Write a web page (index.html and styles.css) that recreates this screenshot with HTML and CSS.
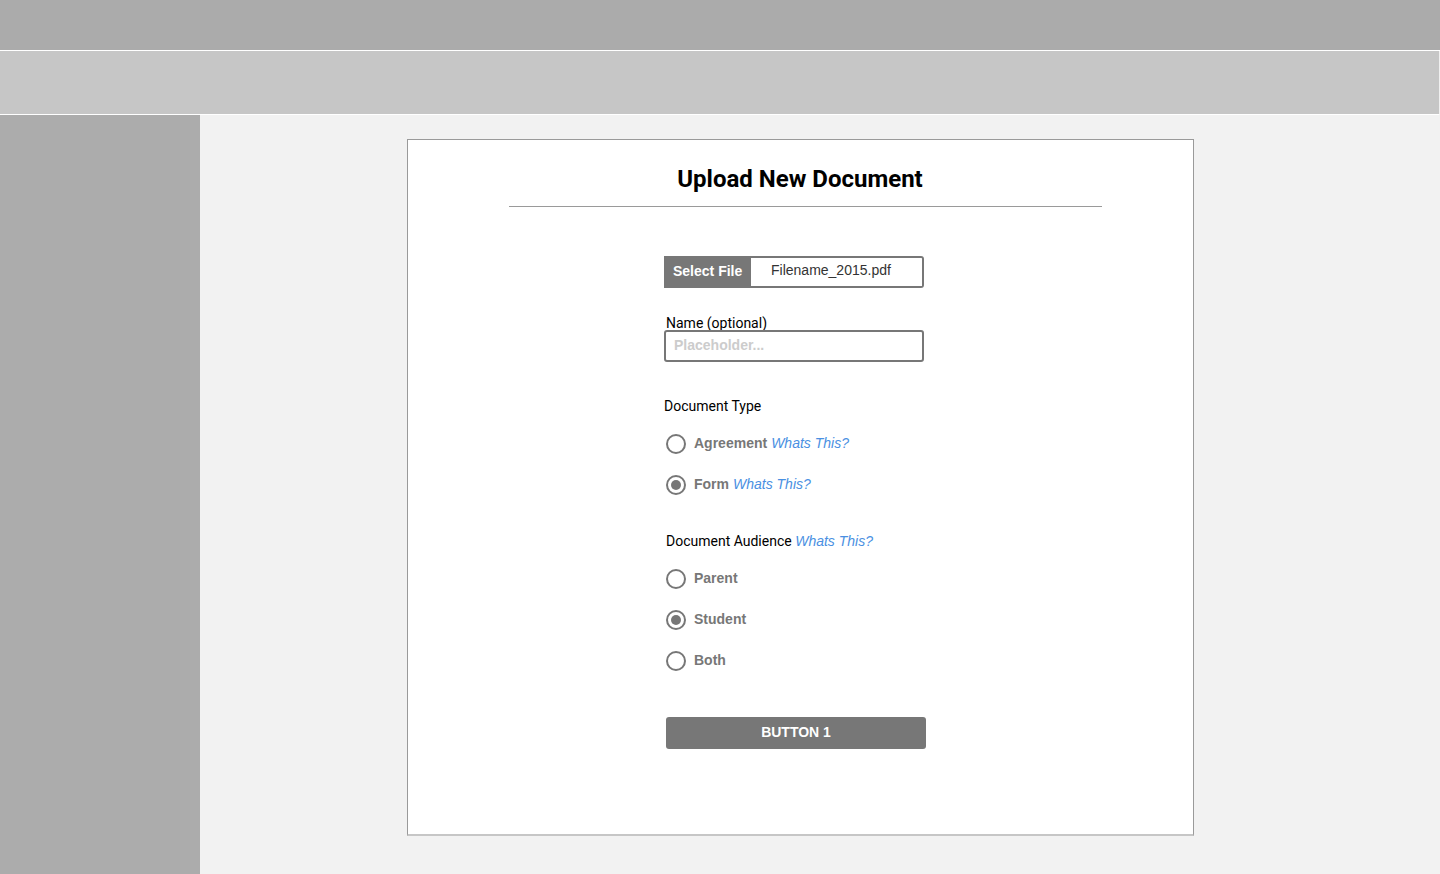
FILE: index.html
```html
<!DOCTYPE html>
<html lang="en">
<head>
<meta charset="utf-8">
<title>Upload New Document</title>
<link rel="stylesheet" href="styles.css">
</head>
<body>
<div class="page">
  <header class="topbar"></header>
  <div class="subbar"></div>
  <div class="layout">
    <aside class="sidebar"></aside>
    <main class="main">
      <section class="card">
        <h1 class="title">Upload New Document</h1>
        <hr class="rule">
        <form class="form">
          <div class="file-picker">
            <span class="file-btn">Select File</span>
            <span class="file-name">Filename_2015.pdf</span>
          </div>
          <label class="name-label" for="name">Name (optional)</label>
          <input class="text-input" id="name" type="text" placeholder="Placeholder...">

          <div class="group-label type-label">Document Type</div>
          <div class="radio-row first">
            <span class="radio"></span>
            <span class="radio-text">Agreement</span>
            <a class="help" href="#">Whats This?</a>
          </div>
          <div class="radio-row">
            <span class="radio checked"></span>
            <span class="radio-text">Form</span>
            <a class="help" href="#">Whats This?</a>
          </div>

          <div class="group-label audience-label">Document Audience <a class="help" href="#">Whats This?</a></div>
          <div class="radio-row first">
            <span class="radio"></span>
            <span class="radio-text">Parent</span>
          </div>
          <div class="radio-row">
            <span class="radio checked"></span>
            <span class="radio-text">Student</span>
          </div>
          <div class="radio-row">
            <span class="radio"></span>
            <span class="radio-text">Both</span>
          </div>

          <button class="primary" type="button">BUTTON 1</button>
        </form>
      </section>
    </main>
  </div>
</div>
</body>
</html>
```

FILE: styles.css
```css
* {
  box-sizing: border-box;
}

html, body {
  margin: 0;
  padding: 0;
}

body {
  font-family: Roboto, "Liberation Sans", Arial, sans-serif;
  background: #f2f2f2;
}

.page {
  display: flex;
  flex-direction: column;
  height: 874px;
}

.topbar {
  height: 51px;
  background: #ababab;
  border-bottom: 1px solid #ffffff;
  flex: none;
}

.subbar {
  height: 64px;
  background: #c6c6c6;
  border-bottom: 1px solid #ffffff;
  border-right: 1px solid #f0f0f0;
  flex: none;
}

.layout {
  flex: 1;
  display: flex;
  min-height: 0;
}

.sidebar {
  width: 200px;
  background: #acacac;
  flex: none;
}

.main {
  flex: 1;
  background: #f2f2f2;
  padding: 24px 0 0 207px;
}

.card {
  width: 787px;
  height: 697px;
  background: #ffffff;
  border: 1px solid #9a9a9a;
  border-bottom: 2px solid #c6c6c6;
  padding-top: 25px;
}

.title {
  margin: 0;
  font-family: Roboto, "Liberation Sans", sans-serif;
  font-weight: 700;
  font-size: 24px;
  line-height: 28px;
  text-align: center;
  color: #000000;
  padding-right: 1px;
}

.rule {
  margin: 13px 0 0 101px;
  width: 593px;
  height: 0;
  border: 0;
  border-top: 1px solid #9a9a9a;
}

.form {
  margin: 49px 0 0 256px;
  width: 262px;
  display: flex;
  flex-direction: column;
  align-items: flex-start;
}

.file-picker {
  width: 260px;
  height: 32px;
  display: flex;
  align-items: stretch;
  border: 2px solid #777777;
  border-left: 0;
  border-radius: 0 3px 3px 0;
  font-family: "Liberation Sans", Arial, sans-serif;
  font-size: 14px;
}

.file-btn {
  width: 87px;
  margin-top: -2px;
  margin-bottom: -2px;
  background: #777777;
  color: #ffffff;
  font-weight: 700;
  display: flex;
  align-items: center;
  padding-left: 9px;
  padding-bottom: 2px;
}

.file-name {
  display: flex;
  align-items: center;
  padding-left: 20px;
  color: #333333;
  padding-bottom: 4px;
}

.name-label {
  margin-top: 28px;
  margin-left: 2px;
  font-size: 14px;
  line-height: 14px;
  height: 14px;
  color: #000000;
}

.text-input {
  width: 260px;
  height: 32px;
  margin: 0;
  border: 2px solid #777777;
  border-radius: 3px;
  padding: 0 0 2px 8px;
  font-family: "Liberation Sans", Arial, sans-serif;
  font-size: 14px;
  font-weight: 700;
  color: #333333;
  background: #ffffff;
  outline: none;
}

.text-input::placeholder {
  color: #cccccc;
  font-weight: 700;
}

.group-label {
  font-size: 14px;
  line-height: 16px;
  color: #000000;
}

.type-label {
  margin-top: 36px;
}

.audience-label {
  margin-top: 38px;
  margin-left: 2px;
}

.radio-row {
  display: flex;
  align-items: center;
  height: 20px;
  margin-top: 21px;
  margin-left: 2px;
  font-family: "Liberation Sans", Arial, sans-serif;
  font-size: 14px;
}

.radio-row.first {
  margin-top: 20px;
}

.radio {
  width: 20px;
  height: 20px;
  border: 2px solid #777777;
  border-radius: 50%;
  display: flex;
  align-items: center;
  justify-content: center;
  margin-right: 8px;
  flex: none;
}

.radio.checked::after {
  content: "";
  width: 10px;
  height: 10px;
  border-radius: 50%;
  background: #777777;
}

.radio-text {
  font-weight: 700;
  color: #777777;
  padding-bottom: 3px;
}

.help {
  font-family: "Liberation Sans", Arial, sans-serif;
  font-style: italic;
  font-size: 14px;
  color: #4a90e2;
  text-decoration: none;
  margin-left: 4px;
  padding-bottom: 3px;
}

.audience-label .help {
  margin-left: 0;
  padding-bottom: 0;
}

.primary {
  margin: 46px 0 0 2px;
  width: 260px;
  height: 32px;
  border: 0;
  border-radius: 3px;
  background: #777777;
  color: #ffffff;
  font-family: "Liberation Sans", Arial, sans-serif;
  font-size: 14px;
  font-weight: 700;
  padding: 0 0 2px 0;
}
```
